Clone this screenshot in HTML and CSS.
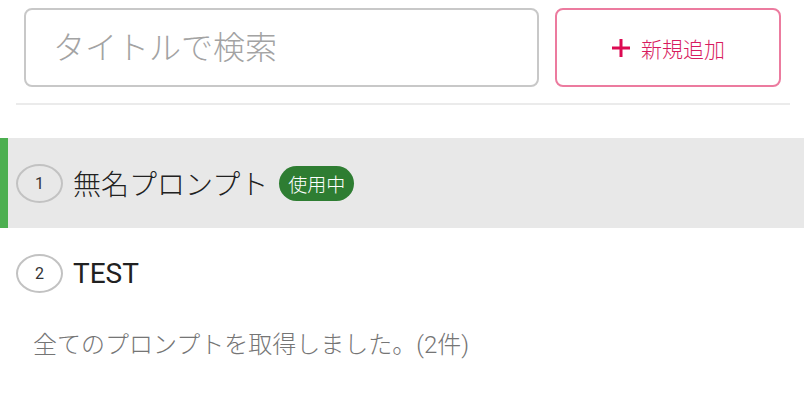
FILE: index.html
```html
<!DOCTYPE html>
<html lang="ja">
  <head>
    <meta charset="UTF-8" />
    <meta name="viewport" content="width=device-width, initial-scale=1.0" />
    <title>プロンプト一覧</title>
    <link rel="stylesheet" href="styles.css">
  </head>
  <body>
    <div class="toolbar">
      <input class="search" type="text" placeholder="タイトルで検索" />
      <button class="add-btn">
        <svg class="plus" width="20" height="20" viewBox="0 0 20 20">
          <path d="M10 1v18M1 10h18" stroke="currentColor" stroke-width="3" fill="none" />
        </svg>
        <span>新規追加</span>
      </button>
    </div>
    <div class="divider"></div>

    <ul class="prompt-list">
      <li class="prompt active">
        <span class="num">1</span>
        <span class="title">無名プロンプト</span>
        <span class="badge">使用中</span>
      </li>
      <li class="prompt">
        <span class="num">2</span>
        <span class="title latin">TEST</span>
      </li>
    </ul>

    <p class="status">全てのプロンプトを取得しました。(2件)</p>
  </body>
</html>
```

FILE: styles.css
```css
body {
  margin: 0;
  font-family: Roboto, "Noto Sans CJK JP", sans-serif;
  font-weight: 300;
  background-color: #ffffff;
  color: #212121;
}

.toolbar {
  display: flex;
  gap: 16px;
  padding: 8px 23px 0 24px;
}

.search {
  flex: 1;
  height: 79px;
  box-sizing: border-box;
  border: 2px solid #c8c8c8;
  border-radius: 8px;
  padding: 0 0 0 27px;
  font-family: inherit;
  font-weight: 300;
  font-size: 32px;
  color: #333;
  outline: none;
}

.search::placeholder {
  color: #a3a3a3;
}

.add-btn {
  width: 226px;
  height: 79px;
  box-sizing: border-box;
  border: 2px solid #ec7b9f;
  border-radius: 8px;
  background-color: #ffffff;
  color: #d81b60;
  font-family: inherit;
  font-weight: 300;
  font-size: 21px;
  display: flex;
  align-items: center;
  justify-content: center;
  gap: 10px;
  cursor: pointer;
}

.plus {
  color: #dc0a52;
}

.divider {
  height: 2px;
  margin: 16px 14px 0 16px;
  background-color: #ebebeb;
}

.prompt-list {
  list-style: none;
  margin: 33px 0 0 0;
  padding: 0;
}

.prompt {
  display: flex;
  align-items: center;
  height: 90px;
  padding-left: 8px;
  border-left: 8px solid transparent;
}

.prompt.active {
  background-color: #e8e8e8;
  border-left-color: #4caf50;
}

.num {
  width: 47px;
  height: 39px;
  box-sizing: border-box;
  border: 2px solid #c2c2c2;
  border-radius: 50%;
  display: flex;
  align-items: center;
  justify-content: center;
  font-size: 16px;
  font-weight: 400;
  color: #333;
}

.title {
  margin-left: 10px;
  font-size: 28px;
  color: #212121;
}

.title.latin {
  font-weight: 400;
}

.badge {
  margin-left: 11px;
  height: 35px;
  padding: 0 9px;
  border-radius: 18px;
  background-color: #2e7d32;
  color: #ffffff;
  font-size: 19px;
  display: flex;
  align-items: center;
}

.status {
  margin: 7px 0 0 33px;
  font-size: 24px;
  color: #757575;
}
```
